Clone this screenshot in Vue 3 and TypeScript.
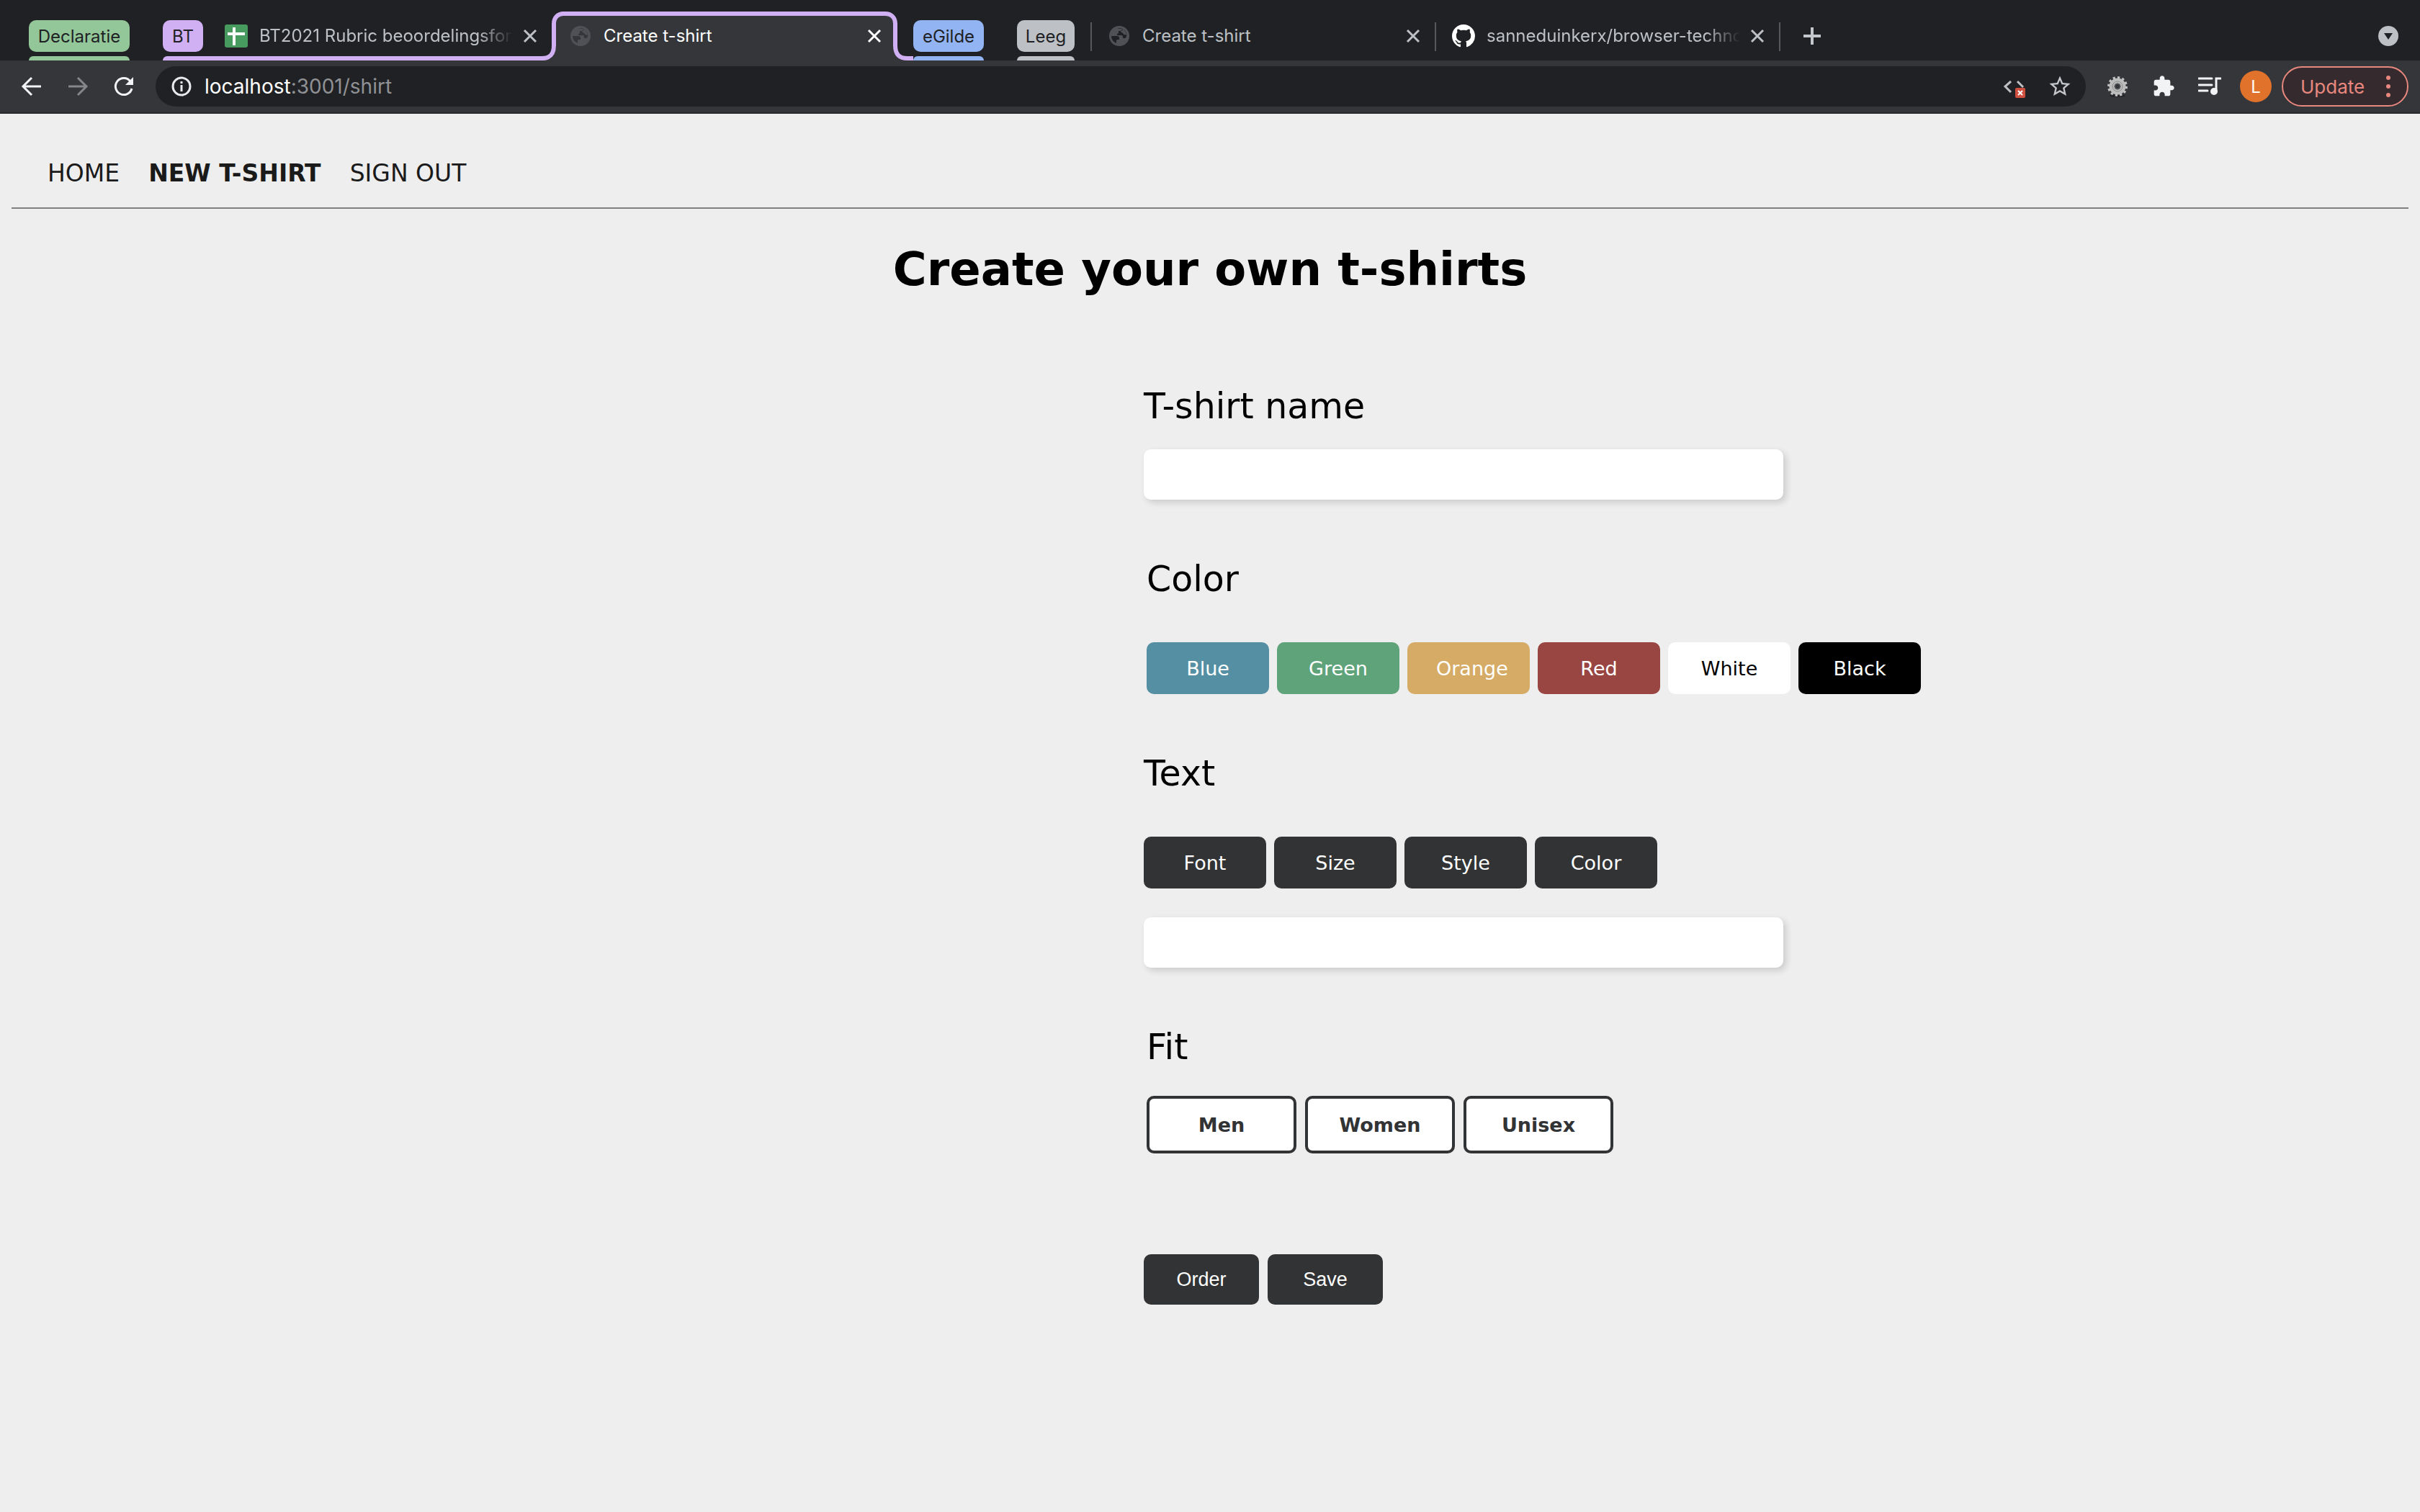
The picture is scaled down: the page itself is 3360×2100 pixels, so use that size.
<script setup lang="ts">
import { ref } from 'vue'

interface Swatch {
  name: string
  tone: string
}

const swatches: Swatch[] = [
  { name: 'Blue', tone: 'blue' },
  { name: 'Green', tone: 'green' },
  { name: 'Orange', tone: 'orange' },
  { name: 'Red', tone: 'red' },
  { name: 'White', tone: 'white' },
  { name: 'Black', tone: 'black' },
]
const textOptions: string[] = ['Font', 'Size', 'Style', 'Color']
const fits: string[] = ['Men', 'Women', 'Unisex']

const shirtName = ref('')
const shirtText = ref('')
</script>

<template>
  <div class="window">
    <div class="tabstrip">
      <button class="chip green" type="button">Declaratie</button>
      <button class="chip purple" type="button">BT</button>
      <div class="tab grouped">
        <svg class="favicon" viewBox="0 0 32 32">
          <rect width="32" height="32" rx="3" fill="#479b5f" />
          <path d="M4 13h24M13 4v25" stroke="#fff" stroke-width="4" fill="none" />
        </svg>
        <span class="title fade">BT2021 Rubric beoordelingsfor</span>
        <button class="close" type="button" aria-label="Close tab">
          <svg viewBox="0 0 32 32"><path d="M8 8l16 16M24 8L8 24" /></svg>
        </button>
      </div>
      <div class="tab active">
        <svg class="outline" viewBox="0 0 528 84">
          <path d="M6 84V81C20 81 25 75 25 63V33C25 24 31 19 38 19H485C493 19 499 24 499 33V63C499 75 504 81 516 81V84Z" fill="#35363a" />
          <path d="M0 81H8C20 81 25 75 25 63V33C25 24 31 19 38 19H485C493 19 499 24 499 33V63C499 75 504 81 516 81H524" fill="none" stroke="#d0aff3" stroke-width="6" />
        </svg>
        <svg class="favicon" viewBox="0 0 32 32">
          <circle cx="16" cy="16" r="14" fill="#505156" />
          <g fill="#35363a">
            <path d="M5 16h8c2 0 3 1 3 3v2h-2c-2 0-2 1-2 2v3A11 11 0 0 1 5 16z" />
            <path d="M13 5.400A11 11 0 0 1 21 6c0 2-1 3-3 3h-3v2c0 1-1 2-2 2v2h6c2 0 2 2 2 4h3c1 0 1-1 2-2A11 11 0 0 0 21 6l1 1a11 11 0 0 1 4 7c-2 1-4 0-5-2-1-1-3-1-3-3l3-3z" />
          </g>
        </svg>
        <span class="title">Create t-shirt</span>
        <button class="close" type="button" aria-label="Close tab">
          <svg viewBox="0 0 32 32"><path d="M8 8l16 16M24 8L8 24" /></svg>
        </button>
      </div>
      <button class="chip blue" type="button">eGilde</button>
      <button class="chip grey" type="button">Leeg</button>
      <div class="tab first">
        <svg class="favicon" viewBox="0 0 32 32">
          <circle cx="16" cy="16" r="14" fill="#505156" />
          <g fill="#202124">
            <path d="M5 16h8c2 0 3 1 3 3v2h-2c-2 0-2 1-2 2v3A11 11 0 0 1 5 16z" />
            <path d="M13 5.400A11 11 0 0 1 21 6c0 2-1 3-3 3h-3v2c0 1-1 2-2 2v2h6c2 0 2 2 2 4h3c1 0 1-1 2-2A11 11 0 0 0 21 6l1 1a11 11 0 0 1 4 7c-2 1-4 0-5-2-1-1-3-1-3-3l3-3z" />
          </g>
        </svg>
        <span class="title">Create t-shirt</span>
        <button class="close" type="button" aria-label="Close tab">
          <svg viewBox="0 0 32 32"><path d="M8 8l16 16M24 8L8 24" /></svg>
        </button>
      </div>
      <div class="tab">
        <svg class="favicon" viewBox="0 0 16 16">
          <path fill="#fff" d="M8 0C3.58 0 0 3.58 0 8c0 3.54 2.29 6.53 5.47 7.59.4.07.55-.17.55-.38 0-.19-.01-.82-.01-1.49-2.01.37-2.53-.49-2.69-.94-.09-.23-.48-.94-.82-1.13-.28-.15-.68-.52-.01-.53.63-.01 1.08.58 1.23.82.72 1.21 1.87.87 2.33.66.07-.52.28-.87.51-1.07-1.78-.2-3.64-.89-3.64-3.95 0-.87.31-1.59.82-2.15-.08-.2-.36-1.02.08-2.12 0 0 .67-.21 2.2.82.64-.18 1.32-.27 2-.27s1.36.09 2 .27c1.53-1.04 2.2-.82 2.2-.82.44 1.1.16 1.92.08 2.12.51.56.82 1.27.82 2.15 0 3.07-1.87 3.75-3.65 3.95.29.25.54.73.54 1.48 0 1.07-.01 1.93-.01 2.2 0 .21.15.46.55.38A8.01 8.01 0 0 0 16 8c0-4.42-3.58-8-8-8z" />
        </svg>
        <span class="title fade">sanneduinkerx/browser-techno</span>
        <button class="close" type="button" aria-label="Close tab">
          <svg viewBox="0 0 32 32"><path d="M8 8l16 16M24 8L8 24" /></svg>
        </button>
      </div>
      <button class="icon new-tab" type="button" aria-label="New tab">
        <svg viewBox="0 0 32 32"><path d="M16 4v24M4 16h24" stroke="#c4c7cb" stroke-width="4" /></svg>
      </button>
      <button class="icon tab-search" type="button" aria-label="Search tabs">
        <svg viewBox="0 0 32 32">
          <circle cx="16" cy="16" r="14" fill="#bdc1c6" />
          <path d="M10 12h12l-6 9z" fill="#202124" />
        </svg>
      </button>
    </div>

    <div class="toolbar">
      <button class="icon" type="button" aria-label="Back">
        <svg viewBox="0 0 32 32"><path d="M29 16H5M16 4L4 16l12 12" fill="none" stroke="#f1f3f4" stroke-width="3" /></svg>
      </button>
      <button class="icon" type="button" aria-label="Forward">
        <svg viewBox="0 0 32 32"><path d="M3 16h24M16 4l12 12-12 12" fill="none" stroke="#85868a" stroke-width="3" /></svg>
      </button>
      <button class="icon" type="button" aria-label="Reload">
        <svg viewBox="0 0 32 32">
          <path d="M25 9A11.500 11.500 0 1 0 27 19" fill="none" stroke="#f1f3f4" stroke-width="3" />
          <path d="M29 3v11H18z" fill="#f1f3f4" />
        </svg>
      </button>
      <div class="omnibox">
        <svg class="info" viewBox="0 0 28 28">
          <circle cx="14" cy="14" r="12" fill="none" stroke="#e8eaed" stroke-width="3" />
          <path d="M14 12v9M14 7v3" stroke="#e8eaed" stroke-width="3" />
        </svg>
        <span class="url"><b>localhost</b>:3001/shirt</span>
        <svg class="glyph" viewBox="0 0 32 32">
          <path d="M12 9l-8 7 8 8M21 9l8 8" fill="none" stroke="#bdbfc2" stroke-width="3" />
          <rect x="18" y="18" width="14" height="14" rx="2" fill="#d05040" />
          <path d="M22 22l6 6M28 22l-6 6" stroke="#fff" stroke-width="2" />
        </svg>
        <svg class="glyph" viewBox="1 1 22 22">
          <path fill="#c4c7cb" d="M22 9.240l-7.190-.62L12 2 9.190 8.630 2 9.240l5.460 4.730L5.820 21 12 17.270 18.180 21l-1.630-7.030L22 9.240zM12 15.400l-3.760 2.270 1-4.280-3.320-2.880 4.380-.38L12 6.100l1.710 4.040 4.380.38-3.320 2.880 1 4.280L12 15.400z" />
        </svg>
      </div>
      <div class="extensions">
        <svg class="glyph" viewBox="0 0 32 32">
          <ellipse cx="16" cy="29" rx="11" ry="2" fill="#242528" />
          <circle cx="16" cy="16" r="12" fill="none" stroke="#c4c4c4" stroke-width="4" pathLength="24" stroke-dasharray="1 1" />
          <circle cx="16" cy="16" r="8" fill="none" stroke="#bcbcbc" stroke-width="7" />
          <circle cx="16" cy="16" r="7" fill="none" stroke="#8a8b8c" stroke-width="1" />
          <circle cx="16" cy="16" r="4" fill="#35363a" stroke="#77787a" stroke-width="1" />
        </svg>
        <svg class="glyph" viewBox="0 0 24 24">
          <path fill="#f1f3f4" d="M20.500 11H19V7c0-1.100-.9-2-2-2h-4V3.500C13 2.120 11.880 1 10.500 1S8 2.120 8 3.500V5H4c-1.100 0-1.990.9-1.990 2v3.800H3.500c1.490 0 2.700 1.210 2.700 2.700s-1.210 2.700-2.700 2.700H2V20c0 1.100.9 2 2 2h3.800v-1.500c0-1.490 1.210-2.700 2.700-2.700s2.700 1.210 2.700 2.700V22H17c1.100 0 2-.9 2-2v-4h1.500c1.380 0 2.500-1.120 2.500-2.500S21.880 11 20.500 11z" />
        </svg>
        <svg class="glyph" viewBox="0 0 32 32">
          <path d="M1 5h18M1 14h18M1 22h12M25 23V5h6" fill="none" stroke="#f1f3f4" stroke-width="3" stroke-linecap="round" />
          <circle cx="22" cy="23" r="5" fill="#f1f3f4" />
        </svg>
      </div>
      <button class="avatar" type="button">L</button>
      <button class="update" type="button">
        Update
        <svg viewBox="0 0 6 32" fill="#e8887e">
          <circle cx="3" cy="4" r="3" /><circle cx="3" cy="16" r="3" /><circle cx="3" cy="28" r="3" />
        </svg>
      </button>
    </div>

    <div class="page">
      <nav>
        <a href="#">HOME</a>
        <a href="#" class="current">NEW T-SHIRT</a>
        <a href="#">SIGN OUT</a>
      </nav>
      <h1>Create your own t-shirts</h1>
      <form @submit.prevent>
        <section>
          <label class="heading" for="shirt-name">T-shirt name</label>
          <input id="shirt-name" v-model="shirtName" type="text" />
        </section>
        <section class="inset">
          <h2 class="heading spaced">Color</h2>
          <div class="row">
            <button v-for="s in swatches" :key="s.name" type="button" class="option" :class="s.tone">{{ s.name }}</button>
          </div>
        </section>
        <section>
          <label class="heading spaced" for="shirt-text">Text</label>
          <div class="row">
            <button v-for="o in textOptions" :key="o" type="button" class="option">{{ o }}</button>
          </div>
          <input id="shirt-text" v-model="shirtText" class="below" type="text" />
        </section>
        <section class="inset">
          <h2 class="heading medium">Fit</h2>
          <div class="row wide">
            <button v-for="f in fits" :key="f" type="button" class="fit">{{ f }}</button>
          </div>
        </section>
        <div class="row wide actions">
          <button type="submit" class="action">Order</button>
          <button type="submit" class="action">Save</button>
        </div>
      </form>
    </div>
  </div>
</template>

<style>
body {
  background: #eeeeee;
}
</style>

<style scoped>
* {
  box-sizing: border-box;
}
button {
  border: 0;
  margin: 0;
  padding: 0;
  background: none;
  font: inherit;
  color: inherit;
  white-space: nowrap;
}
.tabstrip,
.toolbar {
  font-family: Inter, "Liberation Sans", sans-serif;
  display: flex;
}
.tabstrip {
  height: 84px;
  background: #202124;
  padding-left: 40px;
  font-size: 24px;
  color: #bdc1c6;
}
.chip {
  flex: none;
  position: relative;
  height: 44px;
  margin-top: 28px;
  border-radius: 10px;
  color: #202124;
}
.chip::after {
  content: "";
  position: absolute;
  left: 0;
  right: 0;
  top: 50px;
  height: 6px;
  border-radius: 6px 6px 0 0;
  background: inherit;
}
.chip.green {
  width: 140px;
  margin-right: 46px;
  background: #93c799;
}
.chip.purple {
  width: 56px;
  background: #d0aff3;
}
.chip.purple::after {
  width: 524px;
}
.chip.blue {
  width: 98px;
  margin-left: 22px;
  background: #92b4f3;
}
.chip.grey {
  width: 80px;
  margin-left: 46px;
  margin-right: 22px;
  background: #bdc1c6;
}
.tab {
  flex: none;
  position: relative;
  display: flex;
  align-items: center;
  width: 478px;
  height: 84px;
  padding: 0 14px 0 22px;
  border-right: 2px solid transparent;
}
.tab::after,
.tab.first::before {
  content: "";
  position: absolute;
  top: 31px;
  width: 2px;
  height: 40px;
  background: #56585c;
}
.tab::after {
  right: -2px;
}
.tab.first::before {
  left: 0;
}
.tab.first {
  width: 480px;
  padding-left: 24px;
}
.tab.grouped {
  width: 484px;
  padding-left: 30px;
  border: 0;
}
.tab.active {
  width: 480px;
  padding-left: 24px;
  padding-right: 16px;
  border: 0;
  color: #ffffff;
}
.tab.grouped::after,
.tab.active::after {
  display: none;
}
.outline {
  position: absolute;
  left: -22px;
  top: 0;
  width: 528px;
  height: 84px;
}
.favicon,
.title,
.close {
  position: relative;
  height: 32px;
  margin-top: 16px;
}
.favicon {
  flex: none;
  width: 32px;
  margin-right: 16px;
}
.title {
  flex: 1;
  min-width: 0;
  margin-right: 8px;
  line-height: 32px;
  white-space: nowrap;
}
.title.fade {
  mask-image: linear-gradient(to left, transparent, #000 48px);
}
.close {
  flex: none;
  width: 32px;
}
.close svg {
  display: block;
  fill: none;
  stroke: currentColor;
  stroke-width: 3;
}
.icon {
  flex: none;
  width: 32px;
  height: 32px;
}
.icon svg {
  display: block;
}
.new-tab {
  margin: 34px 0 0 28px;
}
.tab-search {
  margin: 34px 28px 0 auto;
}
.toolbar {
  height: 74px;
  align-items: center;
  padding: 0 16px 0 28px;
  background: #35363a;
  border-bottom: 2px solid #28292c;
  font-size: 28px;
}
.toolbar > .icon {
  margin-right: 32px;
}
.toolbar > .icon:nth-child(3) {
  margin-right: 28px;
}
.omnibox {
  flex: 1;
  display: flex;
  align-items: center;
  height: 56px;
  padding: 0 20px 0 22px;
  border-radius: 28px;
  background: #202124;
}
.info {
  width: 28px;
  height: 28px;
  margin-right: 18px;
}
.url {
  flex: 1;
  color: #8f9194;
}
.url b {
  font-weight: 400;
  color: #ffffff;
}
.glyph {
  flex: none;
  width: 32px;
  height: 32px;
}
.omnibox .glyph + .glyph {
  margin-left: 32px;
}
.extensions {
  display: flex;
  gap: 32px;
  margin: 0 26px 0 28px;
}
.avatar {
  width: 44px;
  height: 44px;
  margin-right: 14px;
  border-radius: 50%;
  background: #e0722b;
  color: #ffffff;
  font-size: 24px;
}
.update {
  display: flex;
  align-items: center;
  justify-content: space-between;
  width: 176px;
  height: 56px;
  padding: 0 23px 0 24px;
  border: 2px solid #e8887e;
  border-radius: 28px;
  background: #352b2e;
  color: #e8887e;
  font-size: 26px;
}
.update svg {
  width: 6px;
  height: 32px;
}
.page {
  padding: 0 16px;
  font-family: Verdana, "DejaVu Sans", sans-serif;
  color: #000000;
}
nav {
  display: flex;
  gap: 40px;
  padding: 63px 50px 27px;
  border-bottom: 2px solid #808080;
  font-size: 33px;
  line-height: 40px;
}
nav a {
  color: #1a1a1a;
  text-decoration: none;
}
nav .current {
  font-weight: 700;
}
h1 {
  margin: 44px 0 0;
  font-size: 64px;
  line-height: 80px;
  text-align: center;
}
form {
  display: grid;
  grid-template-columns: 393fr 439fr;
  margin-top: 120px;
}
form > * {
  grid-column: 2;
}
section {
  margin-bottom: 80px;
}
.inset {
  padding-left: 4px;
}
.heading {
  display: block;
  margin: 0 0 28px;
  font-size: 49px;
  font-weight: 400;
  line-height: 62px;
}
.heading.medium {
  margin-bottom: 36px;
}
.heading.spaced {
  margin-bottom: 56px;
}
input {
  display: block;
  width: 888px;
  height: 70px;
  padding: 0 20px;
  border: 0;
  border-radius: 10px;
  background: #ffffff;
  box-shadow: 4px 4px 10px rgba(0, 0, 0, 0.15);
  font: inherit;
  font-size: 27px;
}
.below {
  margin-top: 40px;
}
.row {
  display: flex;
  gap: 11px;
}
.row.wide {
  gap: 12px;
}
.option {
  width: 170px;
  height: 72px;
  padding: 0 40px;
  border-radius: 10px;
  background: #323335;
  color: #ffffff;
  font-size: 27px;
}
.option.blue {
  background: #558fa3;
}
.option.green {
  background: #5fa37b;
}
.option.orange {
  background: #d5ab65;
}
.option.red {
  background: #994542;
}
.option.white {
  background: #ffffff;
  color: #000000;
}
.option.black {
  background: #000000;
}
.fit {
  width: 208px;
  height: 80px;
  border: 4px solid #323335;
  border-radius: 10px;
  background: #ffffff;
  color: #323335;
  font-size: 27px;
  font-weight: 700;
}
.actions {
  padding-top: 60px;
}
.action {
  width: 160px;
  height: 70px;
  border-radius: 10px;
  background: #323335;
  color: #ffffff;
  font-family: "Liberation Sans", Arial, sans-serif;
  font-size: 27px;
}
</style>
